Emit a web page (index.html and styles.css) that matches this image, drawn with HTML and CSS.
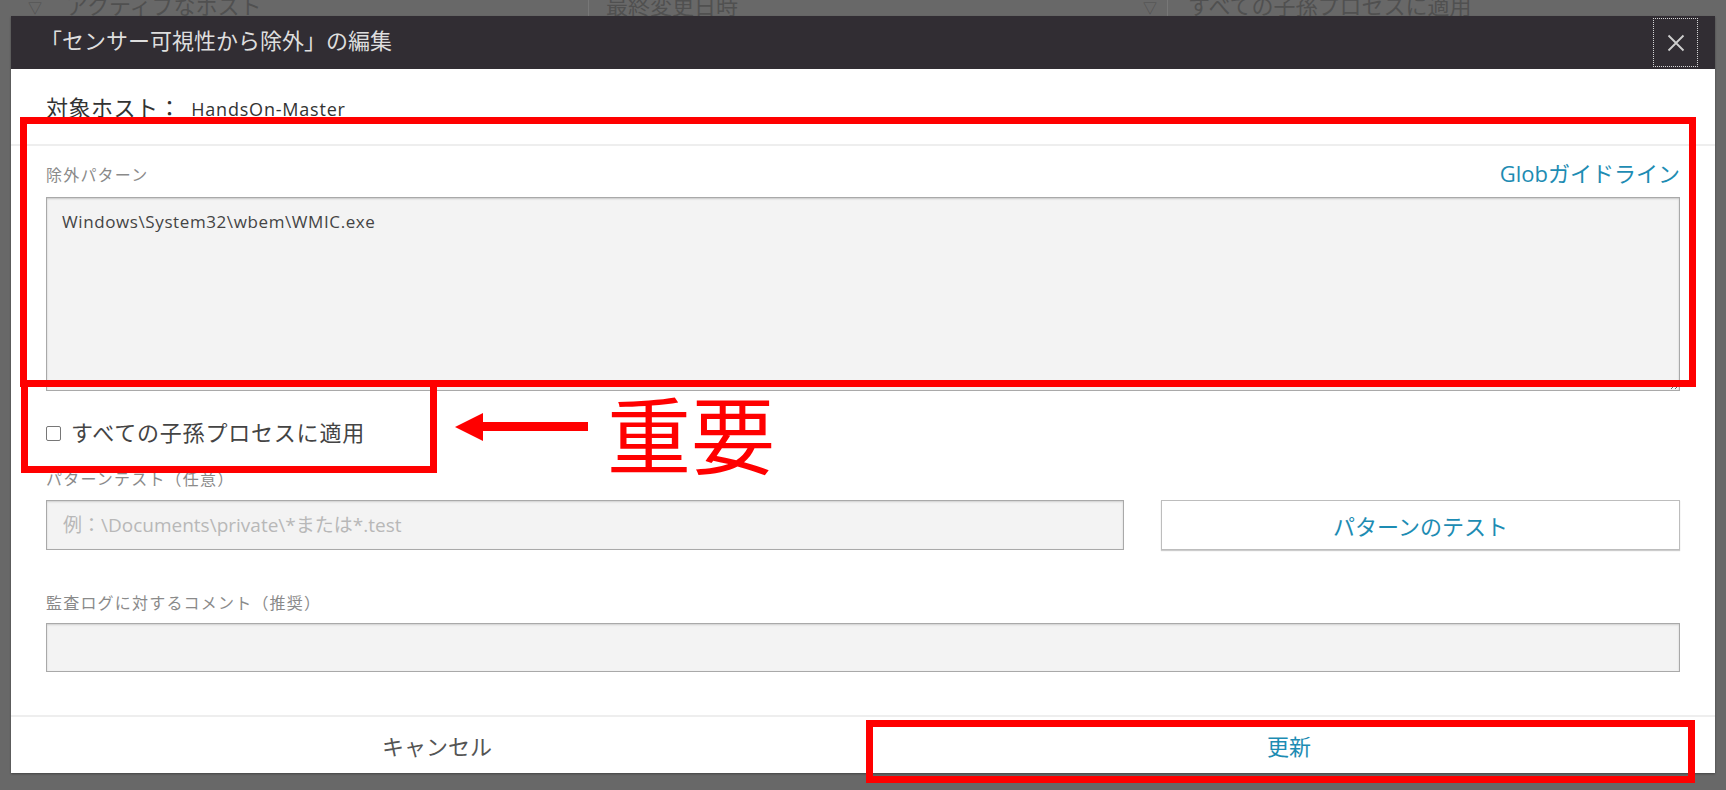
FILE: index.html
```html
<!DOCTYPE html>
<html lang="ja">
<head>
    <meta charset="UTF-8">
    <meta name="viewport" content="width=device-width, initial-scale=1.0">
    <title>「センサー可視性から除外」の編集</title>
    <link rel="stylesheet" href="styles.css">
</head>
<body>
    <!-- 背景のテーブルヘッダー（モーダルで暗くなっている） -->
    <div class="table-head">
        <div class="head-cell cell-host">
            <span class="sort-mark">▽</span>
            <span>アクティブなホスト</span>
        </div>
        <div class="head-cell cell-date">
            <span>最終変更日時</span>
            <span class="sort-mark">▽</span>
        </div>
        <div class="head-cell cell-child">
            <span>すべての子孫プロセスに適用</span>
        </div>
    </div>

    <div class="modal">
        <div class="modal-header">
            <h1>「センサー可視性から除外」の編集</h1>
            <button class="close-btn" aria-label="閉じる">
                <svg width="18" height="18" viewBox="0 0 18 18">
                    <path d="M1.5 1.5 L16.5 16.5 M16.5 1.5 L1.5 16.5" stroke="#cfcfcf" stroke-width="1.8" fill="none"/>
                </svg>
            </button>
        </div>

        <div class="host-row">
            <span class="host-label">対象ホスト：</span>
            <span class="host-name">HandsOn-Master</span>
        </div>

        <div class="modal-form">
            <div class="label-row">
                <label class="field-label" for="pattern">除外パターン</label>
                <a class="guide-link" href="#">Globガイドライン</a>
            </div>
            <textarea id="pattern" class="pattern-box">Windows\System32\wbem\WMIC.exe</textarea>

            <label class="check-row">
                <input type="checkbox" class="check-box">
                <span>すべての子孫プロセスに適用</span>
            </label>

            <div class="field-label test-label">パターンテスト（任意）</div>
            <div class="test-row">
                <input type="text" class="text-box" placeholder="例：\Documents\private\*または*.test">
                <button class="test-btn">パターンのテスト</button>
            </div>

            <div class="field-label comment-label">監査ログに対するコメント（推奨）</div>
            <input type="text" class="text-box comment-box">
        </div>

        <div class="modal-footer">
            <button class="footer-btn cancel-btn">キャンセル</button>
            <button class="footer-btn update-btn">更新</button>
        </div>
    </div>

    <!-- 注釈（赤枠・矢印） -->
    <div class="mark mark-pattern"></div>
    <div class="mark mark-check"></div>
    <div class="mark mark-update"></div>
    <svg class="mark-arrow" width="145" height="38" viewBox="0 0 145 38">
        <polygon points="5,19 33,5 33,33" fill="#ff0000"/>
        <rect x="32" y="14" width="106" height="9" fill="#ff0000"/>
    </svg>
    <div class="mark-text">重要</div>
</body>
</html>
```

FILE: styles.css
```css
:root {
    --ui-font: "Open Sans", "Noto Sans CJK JP", sans-serif;
    --backdrop: #686868;
    --header-bg: #312d33;
    --text-color: #444;
    --label-color: #8a8a8a;
    --link-color: #1d8cb3;
    --field-bg: #f3f3f3;
    --field-border: #a9a9a9;
    --mark-color: #ff0000;
}

* {
    box-sizing: border-box;
    margin: 0;
    padding: 0;
}

body {
    position: relative;
    width: 1726px;
    height: 790px;
    overflow: hidden;
    background: var(--backdrop);
    font-family: var(--ui-font);
    color: var(--text-color);
}

/* 背景のテーブル */
.table-head {
    display: flex;
    height: 16px;
    overflow: hidden;
    font-size: 22px;
    line-height: 10px;
    color: #505050;
}

.head-cell {
    display: flex;
    gap: 20px;
    height: 16px;
}

.cell-host {
    width: 588px;
    padding-left: 28px;
    gap: 24px;
}

.cell-date {
    width: 579px;
    padding: 0 10px 0 17px;
    justify-content: space-between;
    border-left: 1px solid #777;
}

.cell-child {
    flex: 1;
    padding-left: 20px;
    border-left: 1px solid #777;
}

.sort-mark {
    font-size: 14px;
    padding-top: 3px;
}

/* モーダル */
.modal {
    position: absolute;
    left: 11px;
    top: 16px;
    width: 1704px;
    background: #fff;
    box-shadow: 0 1px 2px rgba(0, 0, 0, 0.35);
}

.modal-header {
    display: flex;
    align-items: center;
    justify-content: space-between;
    height: 53px;
    padding: 0 17px 0 29px;
    background: var(--header-bg);
}

.modal-header h1 {
    font-size: 22px;
    font-weight: normal;
    line-height: 30px;
    margin-bottom: 5px;
    color: #dedede;
}

.close-btn {
    display: flex;
    align-items: center;
    justify-content: center;
    width: 45px;
    height: 49px;
    background: none;
    border: 1px dotted rgba(255, 255, 255, 0.8);
    cursor: pointer;
}

.host-row {
    padding: 23px 35px 19px;
    line-height: 30px;
    border-bottom: 2px solid #eeeeee;
    color: #333;
}

.host-label {
    font-size: 22px;
    letter-spacing: 0.5px;
}

.host-name {
    font-size: 18px;
    letter-spacing: 0.8px;
    margin-left: 6px;
}

.modal-form {
    display: flex;
    flex-direction: column;
    padding: 0 35px 43px;
}

.label-row {
    display: flex;
    justify-content: space-between;
    align-items: center;
    margin-top: 17px;
    height: 24px;
}

.field-label {
    font-size: 16px;
    line-height: 22px;
    letter-spacing: 1.2px;
    color: var(--label-color);
}

.guide-link {
    font-size: 22px;
    line-height: 24px;
    margin-top: -4px;
    color: var(--link-color);
    text-decoration: none;
}

.pattern-box {
    display: block;
    margin-top: 10px;
    width: 100%;
    height: 194px;
    padding: 12px 15px;
    font-family: var(--ui-font);
    font-size: 17px;
    letter-spacing: 0.6px;
    color: #444;
    background: var(--field-bg);
    border: 1px solid var(--field-border);
    box-shadow: inset 0 1px 2px rgba(0, 0, 0, 0.18);
    outline: none;
}

.check-row {
    display: flex;
    align-items: center;
    gap: 10px;
    margin-top: 25px;
    height: 30px;
    font-size: 22px;
    letter-spacing: 0.8px;
}

.check-box {
    appearance: none;
    width: 15px;
    height: 15px;
    margin-top: 4px;
    border: 1px solid #777;
    border-radius: 2px;
    background: #fff;
}

.test-label {
    margin-top: 22px;
}

.test-row {
    display: grid;
    grid-template-columns: 1fr 519px;
    gap: 37px;
    margin-top: 10px;
}

.text-box {
    height: 50px;
    padding: 0 16px;
    font-family: var(--ui-font);
    font-size: 19px;
    color: #444;
    background: var(--field-bg);
    border: 1px solid var(--field-border);
    box-shadow: inset 0 1px 2px rgba(0, 0, 0, 0.15);
    outline: none;
}

.text-box::placeholder {
    color: #b8b8b8;
}

.test-btn {
    height: 50px;
    font-family: var(--ui-font);
    font-size: 22px;
    color: var(--link-color);
    background: #fff;
    border: 1px solid #bdbdbd;
    box-shadow: 0 1px 1px rgba(0, 0, 0, 0.2);
    cursor: pointer;
}

.comment-label {
    margin-top: 42px;
}

.comment-box {
    margin-top: 9px;
    height: 49px;
}

.modal-footer {
    display: flex;
    height: 58px;
    border-top: 2px solid #eeeeee;
}

.footer-btn {
    flex: 1;
    font-family: var(--ui-font);
    font-size: 22px;
    background: #fff;
    border: none;
    cursor: pointer;
}

.cancel-btn {
    color: #555;
}

.update-btn {
    color: var(--link-color);
}

/* 注釈 */
.mark {
    position: absolute;
    border: 7px solid var(--mark-color);
}

.mark-pattern {
    left: 20px;
    top: 117px;
    width: 1676px;
    height: 270px;
}

.mark-check {
    left: 21px;
    top: 380px;
    width: 416px;
    height: 93px;
}

.mark-update {
    left: 866px;
    top: 720px;
    width: 829px;
    height: 63px;
}

.mark-arrow {
    position: absolute;
    left: 450px;
    top: 408px;
}

.mark-text {
    position: absolute;
    left: 607px;
    top: 390px;
    font-family: "Noto Sans CJK JP", sans-serif;
    font-size: 84px;
    line-height: 84px;
    color: var(--mark-color);
}
```
